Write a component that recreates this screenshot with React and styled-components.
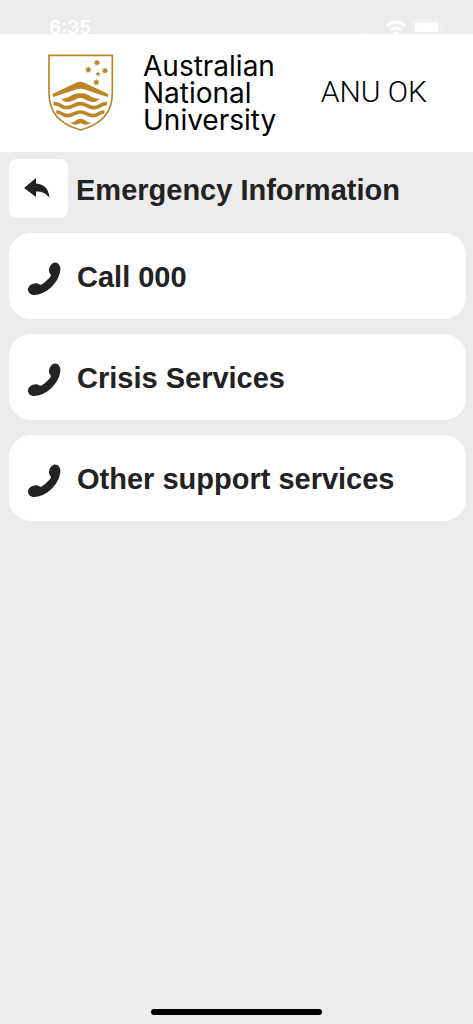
import React from 'react';
import styled, { createGlobalStyle } from 'styled-components';

const GlobalStyle = createGlobalStyle`
    * {
        box-sizing: border-box;
    }
    body {
        margin: 0;
        background-color: #ececec;
        color: #222;
        font-family: "Liberation Sans", Arial, sans-serif;
    }
`;

const Page = styled.div`
    display: flex;
    flex-direction: column;
    min-height: 100vh;
`;

const StatusBar = styled.div`
    display: flex;
    align-items: flex-end;
    justify-content: space-between;
    height: 34px;
    padding: 0 28px 0 49px;
    color: white;
`;

const Time = styled.time`
    font-family: Inter, sans-serif;
    font-size: 19px;
    font-weight: 600;
    line-height: 13px;
`;

const StatusIcons = styled.svg`
    display: block;
    width: 86px;
    height: 15px;
`;

const Header = styled.header`
    display: flex;
    align-items: center;
    justify-content: space-between;
    height: 118px;
    padding: 0 46px 2px 48px;
    background-color: white;
    color: black;
`;

const Brand = styled.div`
    display: flex;
    align-items: center;
    gap: 29px;
`;

const Crest = styled.svg`
    display: block;
    width: 66px;
    height: 77px;
`;

const University = styled.div`
    padding-top: 2px;
    font-family: Inter, sans-serif;
    font-size: 28px;
    line-height: 27px;
`;

const AppName = styled.div`
    font-family: Roboto, sans-serif;
    font-size: 30px;
    font-weight: 300;
    line-height: 36px;
`;

const Main = styled.main`
    flex: 1;
    padding: 7px 7px 0 9px;
`;

const TitleRow = styled.div`
    display: flex;
    align-items: center;
    gap: 8px;
    margin-bottom: 15px;
`;

const BackButton = styled.button`
    display: flex;
    align-items: center;
    justify-content: center;
    width: 59px;
    height: 59px;
    padding: 0 3px 0 0;
    border: none;
    border-radius: 8px;
    background-color: white;
    color: #222;
    cursor: pointer;
`;

const Title = styled.h1`
    margin: 0;
    padding-top: 2px;
    font-size: 29px;
    line-height: 36px;
`;

const CardList = styled.div`
    display: flex;
    flex-direction: column;
    gap: 15px;
`;

const Card = styled.button`
    display: flex;
    align-items: center;
    gap: 16px;
    width: 100%;
    height: 86px;
    padding: 2px 19px 0;
    border: none;
    border-radius: 22px;
    background-color: white;
    color: #222;
    font-family: inherit;
    font-size: 29px;
    font-weight: bold;
    line-height: 36px;
    text-align: left;
    cursor: pointer;
`;

const PhoneSvg = styled.svg`
    flex: none;
    width: 33px;
    height: 36px;
`;

const HomeBar = styled.div`
    align-self: center;
    width: 36%;
    height: 6px;
    margin-bottom: 9px;
    border-radius: 3px;
    background-color: black;
`;

const services = ['Call 000', 'Crisis Services', 'Other support services'];

const stars = [
    [187, 66, 11],
    [161, 87, 11],
    [211, 90, 11],
    [190, 100, 8],
    [185, 125, 11],
];

function starPoints([cx, cy, r]) {
    const count = r > 8 ? 14 : 10;
    return Array.from({ length: count }, (_, i) => {
        const angle = (i * 2 * Math.PI) / count - Math.PI / 2;
        const radius = i % 2 ? r * 0.5 : r;
        return `${cx + radius * Math.cos(angle)},${cy + radius * Math.sin(angle)}`;
    }).join(' ');
}

function CrestLogo() {
    return (
        <Crest viewBox="40 40 198 231" fill="#be8428" aria-hidden="true">
            <path
                d="M43 44H233V158C233 216 199 252 138 268C77 252 43 216 43 158Z"
                fill="none"
                stroke="#be8428"
                strokeWidth="5"
            />
            {stars.map((star) => (
                <polygon key={star.join()} points={starPoints(star)} />
            ))}
            <path d="M53 160L128 125Q137 121 146 125L221 160L219 169Q182 158 148 146Q137 142 126 146Q92 158 55 169Z" />
            <path d="M79 174C99 176 108 162 129 158Q137 157 145 158C166 162 175 176 195 174C181 190 166 184 149 175Q137 169 125 175C108 184 93 190 79 174Z" />
            <g fill="none" stroke="#be8428" strokeWidth="11">
                <path d="M57 189C75 187 79 201 97 201C115 201 119 189 137 189C155 189 159 201 177 201C195 201 199 187 217 189" />
                <path d="M65 214C80 213 83 225 99 225C115 225 120 214 137 214C154 214 159 225 175 225C191 225 194 213 209 214" />
            </g>
            <path d="M107 245C121 247 124 234 138 234C152 234 155 247 169 245C159 256 147 252 138 247C129 252 117 256 107 245Z" />
        </Crest>
    );
}

function ReplyIcon() {
    return (
        <svg width="26" height="22" viewBox="0 0 26 22" fill="currentColor" aria-hidden="true">
            <path d="M0 10L12 0V5.500C20 6 25 11 25.500 20C22 15 18 13.500 12 13.500V19Z" />
        </svg>
    );
}

function PhoneIcon() {
    return (
        <PhoneSvg viewBox="0 -1 33 36" fill="currentColor" aria-hidden="true">
            <path d="M27 2.500C30.500 2.500 32.600 6 32.400 9C32 16 28.500 22 23.500 27C18 32.300 11.500 35 6 35C2.500 35 0 32.500 0 29.500C0 26 4 23.200 8 23.200C11 23.200 11.500 25.300 13.500 24.500C16.500 23 20.500 19 22.700 16C23.800 14.500 21 13.500 21 10.500C21 6.500 24 2.500 27 2.500Z" />
        </PhoneSvg>
    );
}

function App() {
    return (
        <Page>
            <GlobalStyle />
            <StatusBar>
                <Time>6:35</Time>
                <StatusIcons viewBox="0 0 86 15" aria-hidden="true">
                    <g fill="#f1f1f1">
                        <circle cx="3" cy="15" r="2" />
                        <circle cx="8" cy="15" r="2" />
                        <circle cx="14" cy="15" r="2" />
                        <circle cx="19" cy="15" r="2" />
                    </g>
                    <g fill="none" stroke="white" strokeWidth="3">
                        <path d="M28 7Q37 -1 46 7" />
                        <path d="M32 11Q37 7 42 11" />
                    </g>
                    <path d="M34 14Q37 11 40 14L37 17Z" fill="white" />
                    <rect x="54" y="1" width="27" height="14" rx="4" fill="none" stroke="#f5f5f5" />
                    <rect x="56" y="3" width="23" height="10" rx="2" fill="white" />
                    <path d="M83 6Q86 8 83 10Z" fill="#f5f5f5" />
                </StatusIcons>
            </StatusBar>
            <Header>
                <Brand>
                    <CrestLogo />
                    <University>
                        Australian<br />National<br />University
                    </University>
                </Brand>
                <AppName>ANU OK</AppName>
            </Header>
            <Main>
                <TitleRow>
                    <BackButton aria-label="Back">
                        <ReplyIcon />
                    </BackButton>
                    <Title>Emergency Information</Title>
                </TitleRow>
                <CardList>
                    {services.map((service) => (
                        <Card key={service}>
                            <PhoneIcon />
                            {service}
                        </Card>
                    ))}
                </CardList>
            </Main>
            <HomeBar />
        </Page>
    );
}

export default App;
